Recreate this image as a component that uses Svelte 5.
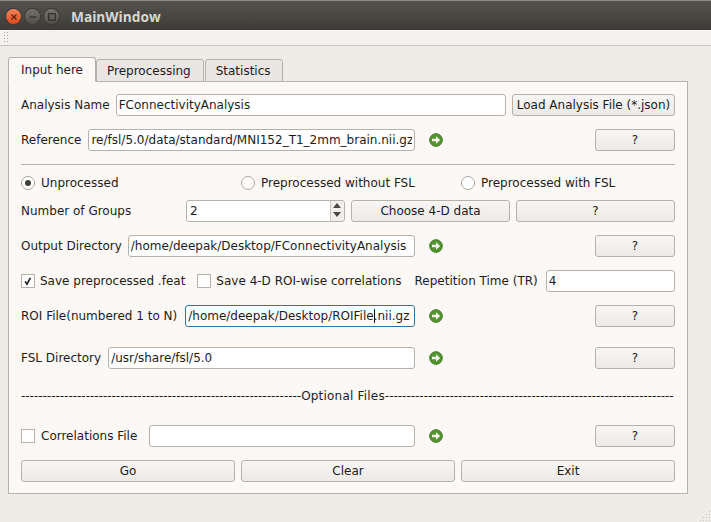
<script lang="ts">
  const tabs = ['Input here', 'Preprocessing', 'Statistics'];
  const leftRule = '-'.repeat(65);
  const rightRule = '-'.repeat(67);
</script>

{#snippet go()}
  <svg class="go" viewBox="0 0 14 14" aria-hidden="true">
    <circle cx="7" cy="7" r="6.3" fill="#52962f" stroke="#3a7522" stroke-width="1" />
    <path d="M3 5.8h4V3.2L11.2 7 7 10.8V8.2H3z" fill="#f2f6ec" />
  </svg>
{/snippet}

{#snippet help()}
  <button class="btn help" type="button">?</button>
{/snippet}

<div class="window">
  <header class="titlebar">
    <span class="ctl close"><svg viewBox="0 0 8 8"><path d="M1.5 1.5l5 5M6.5 1.5l-5 5" stroke="#5a1a08" stroke-width="1.1" /></svg></span>
    <span class="ctl min"><svg viewBox="0 0 8 8"><path d="M0.5 4h7" stroke="#2f2e2a" stroke-width="1.2" /></svg></span>
    <span class="ctl max"><svg viewBox="0 0 8 8"><rect x="0.7" y="0.7" width="6.6" height="6.6" fill="none" stroke="#2f2e2a" stroke-width="1.2" /></svg></span>
    <span class="title">MainWindow</span>
  </header>

  <div class="toolbar"><span class="handle"></span></div>

  <main class="central">
    <nav class="tabs">
      {#each tabs as tab, i}
        <button class="tab" class:active={i === 0} type="button">{tab}</button>
      {/each}
    </nav>

    <section class="pane">
      <div class="row">
        <label class="lbl" for="name">Analysis Name</label>
        <input id="name" class="field grow" value="FConnectivityAnalysis" />
        <button class="btn load" type="button">Load Analysis File (*.json)</button>
      </div>

      <div class="row">
        <div class="path">
          <label class="lbl" for="ref">Reference</label>
          <input id="ref" class="field grow" value="re/fsl/5.0/data/standard/MNI152_T1_2mm_brain.nii.gz" />
        </div>
        {@render go()}
        {@render help()}
      </div>

      <hr class="sep" />

      <div class="thirds radios">
        <span class="opt"><span class="radio on"></span>Unprocessed</span>
        <span class="opt"><span class="radio"></span>Preprocessed without FSL</span>
        <span class="opt"><span class="radio"></span>Preprocessed with FSL</span>
      </div>

      <div class="fourths groups">
        <span class="lbl">Number of Groups</span>
        <div class="spin">
          <span class="spin-val">2</span>
          <span class="spin-btns">
            <svg viewBox="0 0 13 20"><path d="M2 7l4-5 4 5z" fill="#4a4844" /><path d="M2 11l4 5 4-5z" fill="#4a4844" /></svg>
          </span>
        </div>
        <button class="btn" type="button">Choose 4-D data</button>
        <button class="btn" type="button">?</button>
      </div>

      <div class="row">
        <div class="path tight">
          <label class="lbl" for="out">Output Directory</label>
          <input id="out" class="field grow" value="/home/deepak/Desktop/FConnectivityAnalysis" />
        </div>
        {@render go()}
        {@render help()}
      </div>

      <div class="row">
        <span class="opt"><span class="check"><svg viewBox="0 0 14 14"><path d="M3.6 7.4l2.2 3.4 4-7.4" fill="none" stroke="#222" stroke-width="1.9" /></svg></span>Save preprocessed .feat</span>
        <span class="opt chk-b"><span class="check"></span>Save 4-D ROI-wise correlations</span>
        <label class="lbl tr" for="tr">Repetition Time (TR)</label>
        <input id="tr" class="field grow" value="4" />
      </div>

      <div class="row">
        <div class="path wide">
          <span class="lbl">ROI File(numbered 1 to N)</span>
          <div class="field grow focus">/home/deepak/Desktop/ROIFile<span class="caret"></span>.nii.gz</div>
        </div>
        {@render go()}
        {@render help()}
      </div>

      <div class="row fsl">
        <div class="path">
          <label class="lbl" for="fsl">FSL Directory</label>
          <input id="fsl" class="field grow" value="/usr/share/fsl/5.0" />
        </div>
        {@render go()}
        {@render help()}
      </div>

      <div class="optional"><span class="rule">{leftRule}</span><span class="cap">Optional Files</span><span class="rule">{rightRule}</span></div>

      <div class="row">
        <div class="path corr">
          <span class="opt"><span class="check"></span>Correlations File</span>
          <input class="field grow" value="" aria-label="Correlations File" />
        </div>
        {@render go()}
        {@render help()}
      </div>

      <div class="thirds">
        <button class="btn" type="button">Go</button>
        <button class="btn" type="button">Clear</button>
        <button class="btn" type="button">Exit</button>
      </div>
    </section>
  </main>

  <span class="grip"></span>
</div>

<style>
  :global(body) {
    background: #efece8;
  }

  .window {
    position: relative;
    height: 522px;
    overflow: hidden;
    display: flex;
    flex-direction: column;
    background: #efece8;
    color: #1c1c1c;
    font: 12px "DejaVu Sans", sans-serif;
  }

  .titlebar {
    flex: none;
    height: 30px;
    box-sizing: border-box;
    display: flex;
    align-items: center;
    gap: 4px;
    padding: 2px 0 0 6px;
    background: linear-gradient(#56534d, #3c3b37);
    border-top: 1px solid #8b8a85;
  }

  .ctl {
    width: 15px;
    height: 15px;
    border-radius: 50%;
    display: flex;
    align-items: center;
    justify-content: center;
    background: linear-gradient(#74726d, #514f4a);
    box-shadow: 0 0 0 1px #3a3935;
  }

  .ctl svg {
    width: 8px;
    height: 8px;
  }

  .close {
    background: linear-gradient(#f2835a, #dd4a1c);
  }

  .title {
    margin-left: 8px;
    color: #d9d6cf;
    font: 700 13.7px "Open Sans", sans-serif;
  }

  .toolbar {
    flex: none;
    height: 15px;
    border-bottom: 1px solid #c9c6c1;
    background: #f4f2ef;
  }

  .handle {
    display: block;
    width: 5px;
    height: 13px;
    margin: 1px 0 0 3px;
    background: radial-gradient(circle, #a9a6a0 0.6px, transparent 0.8px) 0 0 / 3px 3px;
  }

  .central {
    flex: 1;
    padding: 11px 23px 0 8px;
  }

  .tabs {
    display: flex;
    align-items: flex-end;
    height: 25px;
    margin-bottom: -1px;
    position: relative;
  }

  .tab {
    height: 23px;
    box-sizing: border-box;
    padding: 0 12px 0 10px;
    margin-right: 1px;
    border: 1px solid #b5b2ac;
    border-radius: 3px 3px 0 0;
    background: #e9e6e3;
    color: inherit;
    font: inherit;
  }

  .tab:last-child {
    padding-right: 11px;
  }

  .tab.active {
    height: 25px;
    padding: 0 12px;
    margin-right: 0;
    background: #fcf8f5;
    border-bottom-color: #fcf8f5;
  }

  .pane {
    height: 413px;
    box-sizing: border-box;
    padding: 12px 12px 0;
    display: flex;
    flex-direction: column;
    border: 1px solid #b5b2ac;
    background: #fcf8f5;
  }

  .row {
    flex: none;
    display: flex;
    align-items: center;
    height: 22px;
    margin-bottom: 13px;
    gap: 6px;
  }

  .path {
    width: 394px;
    display: flex;
    align-items: center;
    gap: 7px;
  }

  .path.tight {
    gap: 6px;
  }

  .path.wide {
    gap: 8px;
  }

  .path.corr {
    gap: 12px;
  }

  .path.corr .check {
    margin-right: 6px;
  }

  .lbl,
  .opt {
    white-space: nowrap;
  }

  .field {
    min-width: 0;
    height: 22px;
    box-sizing: border-box;
    padding: 0 2px;
    border: 1px solid #b5b2ac;
    border-radius: 3px;
    outline: none;
    background: #fff;
    color: inherit;
    font: inherit;
    line-height: 20px;
    white-space: nowrap;
  }

  .grow {
    flex: 1;
  }

  .focus {
    border-color: #2c74ac;
    overflow: hidden;
  }

  .caret {
    display: inline-block;
    width: 1px;
    height: 14px;
    margin-right: -1px;
    vertical-align: -3px;
    background: #111;
  }

  .btn {
    height: 22px;
    box-sizing: border-box;
    padding: 0;
    border: 1px solid #b5b2ac;
    border-radius: 3px;
    background: linear-gradient(#f8f6f4, #ece9e6);
    color: inherit;
    font: inherit;
  }

  .load {
    width: 163px;
    flex: none;
  }

  .help {
    width: 80px;
    flex: none;
    margin-left: auto;
  }

  .go {
    flex: none;
    width: 14px;
    height: 14px;
    margin-left: 8px;
  }

  .sep {
    width: 100%;
    height: 1px;
    box-sizing: border-box;
    margin: 0 0 7px;
    border: 0;
    background: #b5b2ac;
  }

  .thirds {
    display: grid;
    grid-template-columns: repeat(3, 1fr);
    gap: 6px;
  }

  .radios {
    height: 22px;
    align-items: center;
    margin-bottom: 6px;
  }

  .fourths {
    display: grid;
    grid-template-columns: repeat(4, 1fr);
    gap: 6px;
    align-items: center;
  }

  .groups {
    margin-bottom: 13px;
  }

  .opt {
    display: flex;
    align-items: center;
  }

  .radio {
    width: 12px;
    height: 12px;
    margin-right: 6px;
    border: 1px solid #aaa7a1;
    border-radius: 50%;
    background: #fff;
    display: flex;
    align-items: center;
    justify-content: center;
  }

  .radio.on::after {
    content: "";
    width: 6px;
    height: 6px;
    border-radius: 50%;
    background: #3f3e3b;
  }

  .check {
    width: 12px;
    height: 12px;
    margin-right: 5px;
    border: 1px solid #b5b2ac;
    background: #fff;
  }

  .check svg {
    display: block;
    width: 12px;
    height: 12px;
  }

  .chk-b {
    margin-left: 6px;
  }

  .tr {
    margin-left: 7px;
  }

  .tr + .field {
    margin-left: 2px;
  }

  .spin {
    height: 22px;
    box-sizing: border-box;
    display: flex;
    border: 1px solid #b5b2ac;
    border-radius: 3px;
    background: #fff;
  }

  .spin-val {
    flex: 1;
    padding-left: 3px;
    line-height: 20px;
  }

  .spin-btns {
    width: 13px;
    flex: none;
    border-left: 1px solid #c9c6c1;
    background: #f1eeeb;
    border-radius: 0 3px 3px 0;
  }

  .spin-btns svg {
    display: block;
    width: 13px;
    height: 20px;
  }

  .fsl {
    margin-top: 7px;
    margin-bottom: 16px;
  }

  .optional {
    height: 22px;
    line-height: 23px;
    margin-bottom: 18px;
    display: flex;
    white-space: nowrap;
  }

  .rule {
    letter-spacing: -0.02px;
  }

  .cap {
    letter-spacing: 0.2px;
  }

  .grip {
    position: absolute;
    right: 1px;
    bottom: 1px;
    width: 11px;
    height: 11px;
    background: radial-gradient(circle, #c4c1bb 0.6px, transparent 0.8px) 0 0 / 3px 3px;
    clip-path: polygon(100% 0, 100% 100%, 0 100%);
  }
</style>
